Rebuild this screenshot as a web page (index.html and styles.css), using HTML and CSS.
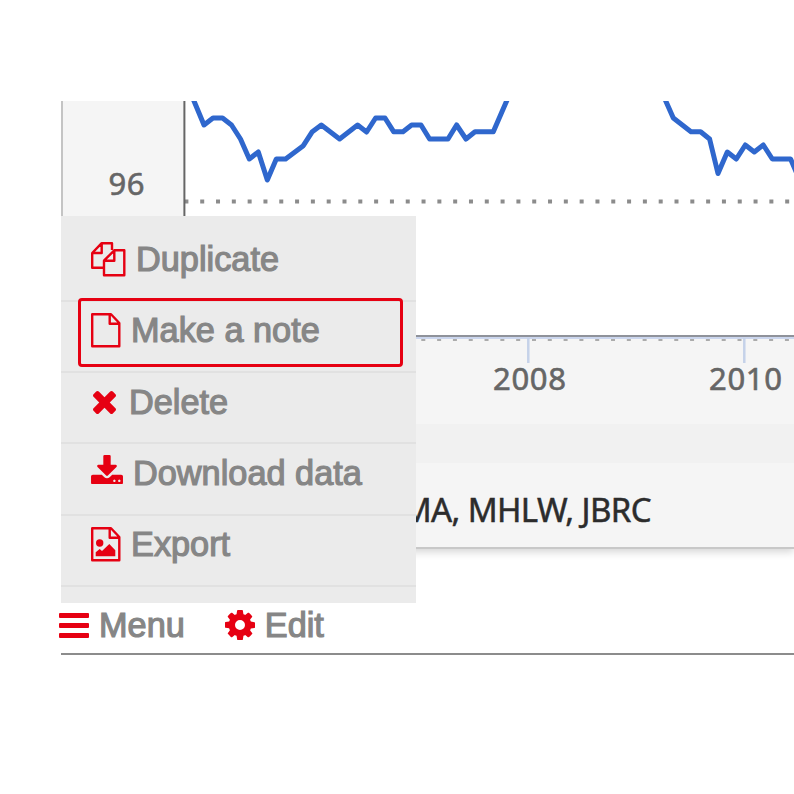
FILE: index.html
```html
<!DOCTYPE html>
<html lang="en">
<head>
<meta charset="utf-8">
<title>Chart menu</title>
<link rel="stylesheet" href="styles.css">
</head>
<body>
<main class="widget">
  <section class="panel">
    <svg class="plot" width="734" height="323" viewBox="60 101 734 323">
      <rect class="plot-bg" x="184" y="101" width="610" height="235"/>
      <rect class="panel-edge" x="61" y="101" width="2" height="200"/>
      <path class="grid" d="M184.4 201.5H794"/>
      <path class="y-axis" d="M184.4 101V336"/>
      <path class="series" d="M191 94L194 101L204 125L213 118H222.500L231.500 125L240.500 139L249.300 159L258.300 152L267.300 180L276.300 159H285.600L303.300 145.700L312.300 131.700L321.300 125L339.600 139L357.600 125L366.600 132L375.600 118H385L393.600 131.700H403L411.600 125H421L429.600 139H448L456.600 125L466 139L475 131.700H493.300L507.500 99"/>
      <path class="series" d="M664 97L673.300 118L691 131.700H700.600L709.600 139L718 173.500L727.300 152L736.300 159L745.300 145L754.300 152L763.300 145L772.300 159H790.600L797 174"/>
      <rect class="axis-dark" x="184" y="335" width="610" height="2"/>
      <rect class="axis-light" x="184" y="337" width="610" height="2"/>
      <path class="axis-dash" d="M421.300 340H794"/>
      <path class="tick" d="M528.300 338V363M744.300 338V363"/>
      <text class="label" x="108.500" y="194.500" textLength="36">96</text>
      <text class="label" x="493" y="389.500" textLength="73">2008</text>
      <text class="label" x="709" y="389.500" textLength="73">2010</text>
    </svg>
    <div class="band"></div>
    <p class="source">MA, MHLW, JBRC</p>
  </section>

  <ul class="menu">
    <li class="item">
      <svg class="line-icon" width="35" height="35" viewBox="0 0 35 35"><path d="M13 25.700H1.200V11L10.700 1.200H21V8M1.200 11H10.700V1.200M13 18.700L23.300 8.300H33.300V33.300H13ZM13 18.700H23.300V8.300"/></svg>
      <span>Duplicate</span>
    </li>
    <li class="item selected">
      <svg class="line-icon" width="30" height="35" viewBox="0 0 30 35"><path d="M1.200 1.200H20L28.300 10V33.300H1.200ZM18.700 1.200V10.700H28.300"/></svg>
      <span>Make a note</span>
    </li>
    <li class="item">
      <svg class="fill-icon cross" width="23" height="23" viewBox="302 366 1188 1188"><path d="M1490 1322q0 40-28 68l-136 136q-28 28-68 28t-68-28l-294-294-294 294q-28 28-68 28t-68-28l-136-136q-28-28-28-68t28-68l294-294-294-294q-28-28-28-68t28-68l136-136q28-28 68-28t68 28l294 294 294-294q28-28 68-28t68 28l136 136q28 28 28 68t-28 68l-294 294 294 294q28 28 28 68z"/></svg>
      <span>Delete</span>
    </li>
    <li class="item">
      <svg class="fill-icon download" width="32" height="29.500" viewBox="64 0 1664 1536"><path d="M1344 1344q0-26-19-45t-45-19-45 19-19 45 19 45 45 19 45-19 19-45zm256 0q0-26-19-45t-45-19-45 19-19 45 19 45 45 19 45-19 19-45zm128-224v320q0 40-28 68t-68 28h-1472q-40 0-68-28t-28-68v-320q0-40 28-68t68-28h465l135 136q58 56 136 56t136-56l136-136h464q40 0 68 28t28 68zm-325-569q17 41-14 70l-448 448q-18 19-45 19t-45-19l-448-448q-31-29-14-70 17-39 59-39h256v-448q0-26 19-45t45-19h256q26 0 45 19t19 45v448h256q42 0 59 39z"/></svg>
      <span>Download data</span>
    </li>
    <li class="item">
      <svg class="line-icon" width="30" height="35" viewBox="0 0 30 35"><path d="M1.200 1.200H20L28.300 10V33.300H1.200ZM18.700 1.200V10.700H28.300"/><path class="solid" d="M4.700 29.300V25.300L8.700 22L11 24L18.300 17L24.300 23.300V29.300Z"/><circle class="solid" cx="8.700" cy="16" r="3.700"/></svg>
      <span>Export</span>
    </li>
  </ul>

  <nav class="toolbar">
    <span class="tool">
      <svg class="fill-icon" width="30" height="25" viewBox="0 0 30 25"><rect width="30" height="5" rx="1"/><rect y="10" width="30" height="5" rx="1"/><rect y="20" width="30" height="5" rx="1"/></svg>
      <span>Menu</span>
    </span>
    <span class="tool">
      <svg class="fill-icon" width="30" height="30" viewBox="128 128 1536 1536"><path d="M1152 896q0-106-75-181t-181-75-181 75-75 181 75 181 181 75 181-75 75-181zm512-109v222q0 12-8 23t-20 13l-185 28q-19 54-39 91 35 50 107 138 10 12 10 25t-9 23q-27 37-99 108t-94 71q-12 0-26-9l-138-108q-44 23-91 38-16 136-29 186-7 28-36 28h-222q-14 0-24.500-8.500t-11.500-21.500l-28-184q-49-16-90-37l-141 107q-10 9-25 9-14 0-25-11-126-114-165-168-7-10-7-23 0-12 8-23 15-21 51-66.500t54-70.500q-27-50-41-99l-183-27q-13-2-21-12.500t-8-23.500v-222q0-12 8-23t19-13l186-28q14-46 39-92-40-57-107-138-10-12-10-24 0-10 9-23 26-36 98.500-107.500t94.500-71.500q13 0 26 10l138 107q44-23 91-38 16-136 29-186 7-28 36-28h222q14 0 24.500 8.500t11.500 21.500l28 184q49 16 90 37l142-107q9-9 24-9 13 0 25 10 129 119 165 170 7 8 7 22 0 12-8 23-15 21-51 66.500t-54 70.500q26 50 41 98l183 28q13 2 21 12.500t8 23.500z"/></svg>
      <span>Edit</span>
    </span>
  </nav>
</main>
</body>
</html>
```
FILE: styles.css
```css
*, *::before, *::after { box-sizing: border-box; }
body { margin: 0; background: #fff; overflow: hidden; }
.widget {
  position: relative;
  width: 794px;
  height: 794px;
  padding-top: 101px;
  overflow: hidden;
}
.panel {
  height: 448px;
  margin-left: 61px;
  background: #f5f5f5;
  border-bottom: 2px solid #c8c8c8;
  box-shadow: 0 3px 8px rgba(0, 0, 0, .17);
  clip-path: inset(0 0 -20px 0);
}
.plot { display: block; margin-left: -1px; }
.plot-bg { fill: #fff; }
.panel-edge { fill: #c4c4c4; }
.grid { stroke: #8c8c8c; stroke-width: 4; stroke-dasharray: 4 11.810; }
.y-axis { stroke: #666; stroke-width: 2; }
.series { fill: none; stroke: #2f67cd; stroke-width: 5; stroke-linejoin: round; }
.axis-dark { fill: #8f929a; }
.axis-light { fill: #cbd6ee; }
.axis-dash { stroke: #929292; stroke-width: 1.500; stroke-dasharray: 4 11.810; }
.tick { stroke: #c5d2e9; stroke-width: 2.500; }
.label { font: 31px "Noto Sans", sans-serif; fill: #666; stroke: #666; stroke-width: .6px; }
.band { height: 39px; background: #f1f1f1; }
.source {
  margin: 0;
  padding: 24px 143px 0 0;
  font: 33px/46px "Noto Sans", sans-serif;
  letter-spacing: -.6px;
  text-align: right;
  color: #2c2c2c;
  -webkit-text-stroke: .5px #2c2c2c;
}
.menu {
  position: absolute;
  left: 61px;
  top: 215.5px;
  width: 355px;
  height: 387px;
  margin: 0;
  padding: 15px 0 0;
  list-style: none;
  background: #ebebeb;
}
.item, .tool {
  display: flex;
  align-items: center;
  font: 34.300px/40px "Liberation Sans", Arial, sans-serif;
  color: #868686;
  -webkit-text-stroke: 1.200px #868686;
}
.item {
  position: relative;
  height: 71.250px;
  padding: 0 0 12px 30px;
  gap: 10px;
  border-bottom: 2px solid #e1e1e1;
}
.selected::after {
  content: "";
  position: absolute;
  left: 17px;
  top: -4px;
  width: 325px;
  height: 69px;
  border: 3px solid #e60012;
  border-radius: 4px;
}
.line-icon { fill: none; stroke: #e60012; stroke-width: 2.400; stroke-linejoin: round; }
.line-icon .solid { fill: #e60012; stroke: none; }
.fill-icon { fill: #e60012; }
.cross { margin: 1px 3px 0 2px; }
.download { margin-bottom: 7px; }
.toolbar {
  position: absolute;
  left: 59px;
  top: 602px;
  width: 735px;
  height: 53px;
  display: flex;
  gap: 40px;
}
.toolbar::after {
  content: "";
  position: absolute;
  left: 2px;
  right: 0;
  bottom: 0;
  height: 2px;
  background: #8c8c8c;
}
.tool { height: 46px; gap: 10px; }
```
